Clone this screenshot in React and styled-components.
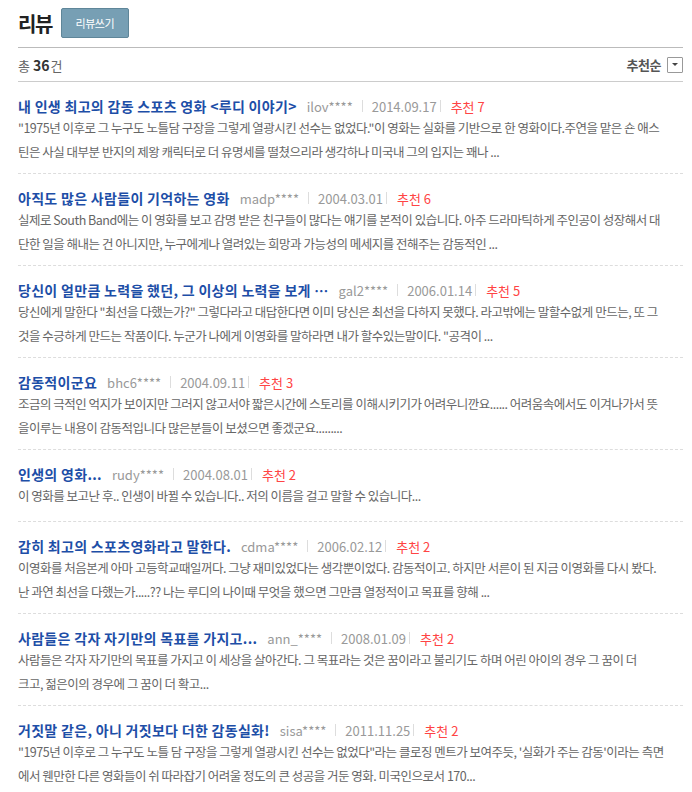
import React from 'react';
import styled, { createGlobalStyle } from 'styled-components';

const GlobalStyle = createGlobalStyle`
	html, body {
		margin: 0;
		padding: 0;
		background: #fff;
	}
	body {
		font-family: "Noto Sans CJK KR", "Noto Sans", sans-serif;
		color: #666;
	}
`;

const Wrap = styled.section`
	padding: 0 9px 0 18px;
`;

const Head = styled.header`
	display: flex;
	align-items: center;
	gap: 9px;
	height: 46px;
	border-bottom: 1px solid #bbb;
	padding-bottom: 1px;

	h2 {
		margin: 0;
		font-size: 20px;
		font-weight: 700;
		color: #222;
		letter-spacing: -1.5px;
	}
`;

const WriteButton = styled.button`
	height: 30px;
	width: 68px;
	margin-top: -1px;
	background: #779fb4;
	border: 1px solid #5f8699;
	border-radius: 2px;
	color: #fff;
	font-family: inherit;
	font-size: 11px;
	letter-spacing: -0.5px;
	padding: 0;
`;

const Summary = styled.div`
	display: flex;
	align-items: center;
	justify-content: space-between;
	height: 33px;
	border-bottom: 1px solid #ccc;
	font-size: 13px;
	color: #666;

	b {
		color: #333;
		font-size: 14px;
		margin: 0 1px 0 3px;
	}
`;

const Sort = styled.div`
	display: flex;
	align-items: center;
	gap: 6px;
	font-weight: 700;
	color: #555;
	font-size: 13px;
	letter-spacing: -0.5px;
`;

const SortBox = styled.span`
	display: inline-flex;
	align-items: center;
	justify-content: center;
	width: 14px;
	height: 14px;
	border: 1px solid #999;
	border-radius: 1px;

	&::after {
		content: '';
		border-left: 3px solid transparent;
		border-right: 3px solid transparent;
		border-top: 3px solid #444;
	}
`;

const List = styled.ul`
	list-style: none;
	margin: 0;
	padding: 0;
`;

const Item = styled.li`
	padding: 14px 0 9px;
	border-bottom: 1px dashed #ddd;
`;

const TitleRow = styled.div`
	display: flex;
	align-items: center;
	height: 20px;
	white-space: nowrap;
`;

const Title = styled.a`
	font-size: 14px;
	font-weight: 700;
	color: #1d4ea7;
	letter-spacing: 0.3px;
	text-decoration: none;
	margin-right: 10px;
`;

const Meta = styled.span`
	font-size: 13px;
	color: ${p => (p.$red ? '#f44' : '#999')};
`;

const Sep = styled.span`
	display: inline-block;
	width: 1px;
	height: 12px;
	background: #ddd;
	margin: ${p => (p.$tight ? '0 10px 0 3px' : '0 9px')};
`;

const Body = styled.p`
	margin: 0;
	min-height: 28px;
	font-size: 12.5px;
	line-height: 24px;
	color: #666;
	letter-spacing: -0.5px;

	span {
		display: block;
		white-space: nowrap;
	}
`;

const reviews = [
	{
		title: '내 인생 최고의 감동 스포츠 영화 <루디 이야기>',
		user: 'ilov****',
		date: '2014.09.17',
		rec: 7,
		lines: [
			'"1975년 이후로 그 누구도 노틀담 구장을 그렇게 열광시킨 선수는 없었다."이 영화는 실화를 기반으로 한 영화이다.주연을 맡은 숀 애스',
			'틴은 사실 대부분 반지의 제왕 캐릭터로 더 유명세를 떨쳤으리라 생각하나 미국내 그의 입지는 꽤나 ...',
		],
	},
	{
		title: '아직도 많은 사람들이 기억하는 영화',
		user: 'madp****',
		date: '2004.03.01',
		rec: 6,
		lines: [
			'실제로 South Band에는 이 영화를 보고 감명 받은 친구들이 많다는 얘기를 본적이 있습니다. 아주 드라마틱하게 주인공이 성장해서 대',
			'단한 일을 해내는 건 아니지만, 누구에게나 열려있는 희망과 가능성의 메세지를 전해주는 감동적인 ...',
		],
	},
	{
		title: '당신이 얼만큼 노력을 했던, 그 이상의 노력을 보게 …',
		user: 'gal2****',
		date: '2006.01.14',
		rec: 5,
		lines: [
			'당신에게 말한다 "최선을 다했는가?" 그렇다라고 대답한다면 이미 당신은 최선을 다하지 못했다. 라고밖에는 말할수없게 만드는, 또 그',
			'것을 수긍하게 만드는 작품이다. 누군가 나에게 이영화를 말하라면 내가 할수있는말이다. "공격이 ...',
		],
	},
	{
		title: '감동적이군요',
		user: 'bhc6****',
		date: '2004.09.11',
		rec: 3,
		lines: [
			'조금의 극적인 억지가 보이지만 그러지 않고서야 짧은시간에 스토리를 이해시키기가 어려우니깐요...... 어려움속에서도 이겨나가서 뜻',
			'을이루는 내용이 감동적입니다 많은분들이 보셨으면 좋겠군요.........',
		],
	},
	{
		title: '인생의 영화...',
		user: 'rudy****',
		date: '2004.08.01',
		rec: 2,
		lines: ['이 영화를 보고난 후.. 인생이 바뀔 수 있습니다.. 저의 이름을 걸고 말할 수 있습니다...'],
	},
	{
		title: '감히 최고의 스포츠영화라고 말한다.',
		user: 'cdma****',
		date: '2006.02.12',
		rec: 2,
		lines: [
			'이영화를 처음본게 아마 고등학교때일꺼다. 그냥 재미있었다는 생각뿐이었다. 감동적이고. 하지만 서른이 된 지금 이영화를 다시 봤다.',
			'난 과연 최선을 다했는가.....?? 나는 루디의 나이때 무엇을 했으면 그만큼 열정적이고 목표를 향해 ...',
		],
	},
	{
		title: '사람들은 각자 자기만의 목표를 가지고...',
		user: 'ann_****',
		date: '2008.01.09',
		rec: 2,
		lines: [
			'사람들은 각자 자기만의 목표를 가지고 이 세상을 살아간다. 그 목표라는 것은 꿈이라고 불리기도 하며 어린 아이의 경우 그 꿈이 더',
			'크고, 젊은이의 경우에 그 꿈이 더 확고...',
		],
	},
	{
		title: '거짓말 같은, 아니 거짓보다 더한 감동실화!',
		user: 'sisa****',
		date: '2011.11.25',
		rec: 2,
		lines: [
			'"1975년 이후로 그 누구도 노틀 담 구장을 그렇게 열광시킨 선수는 없었다"라는 클로징 멘트가 보여주듯, \'실화가 주는 감동\'이라는 측면',
			'에서 웬만한 다른 영화들이 쉬 따라잡기 어려울 정도의 큰 성공을 거둔 영화. 미국인으로서 170...',
		],
	},
];

export default function App() {
	return (
		<>
			<GlobalStyle />
			<Wrap>
				<Head>
					<h2>리뷰</h2>
					<WriteButton>리뷰쓰기</WriteButton>
				</Head>
				<Summary>
					<span>
						총<b>36</b>건
					</span>
					<Sort>
						추천순
						<SortBox />
					</Sort>
				</Summary>
				<List>
					{reviews.map(r => (
						<Item key={r.user}>
							<TitleRow>
								<Title href="#">{r.title}</Title>
								<Meta>{r.user}</Meta>
								<Sep />
								<Meta>{r.date}</Meta>
								<Sep $tight />
								<Meta $red>추천 {r.rec}</Meta>
							</TitleRow>
							<Body>
								{r.lines.map(l => (
									<span key={l}>{l}</span>
								))}
							</Body>
						</Item>
					))}
				</List>
			</Wrap>
		</>
	);
}
